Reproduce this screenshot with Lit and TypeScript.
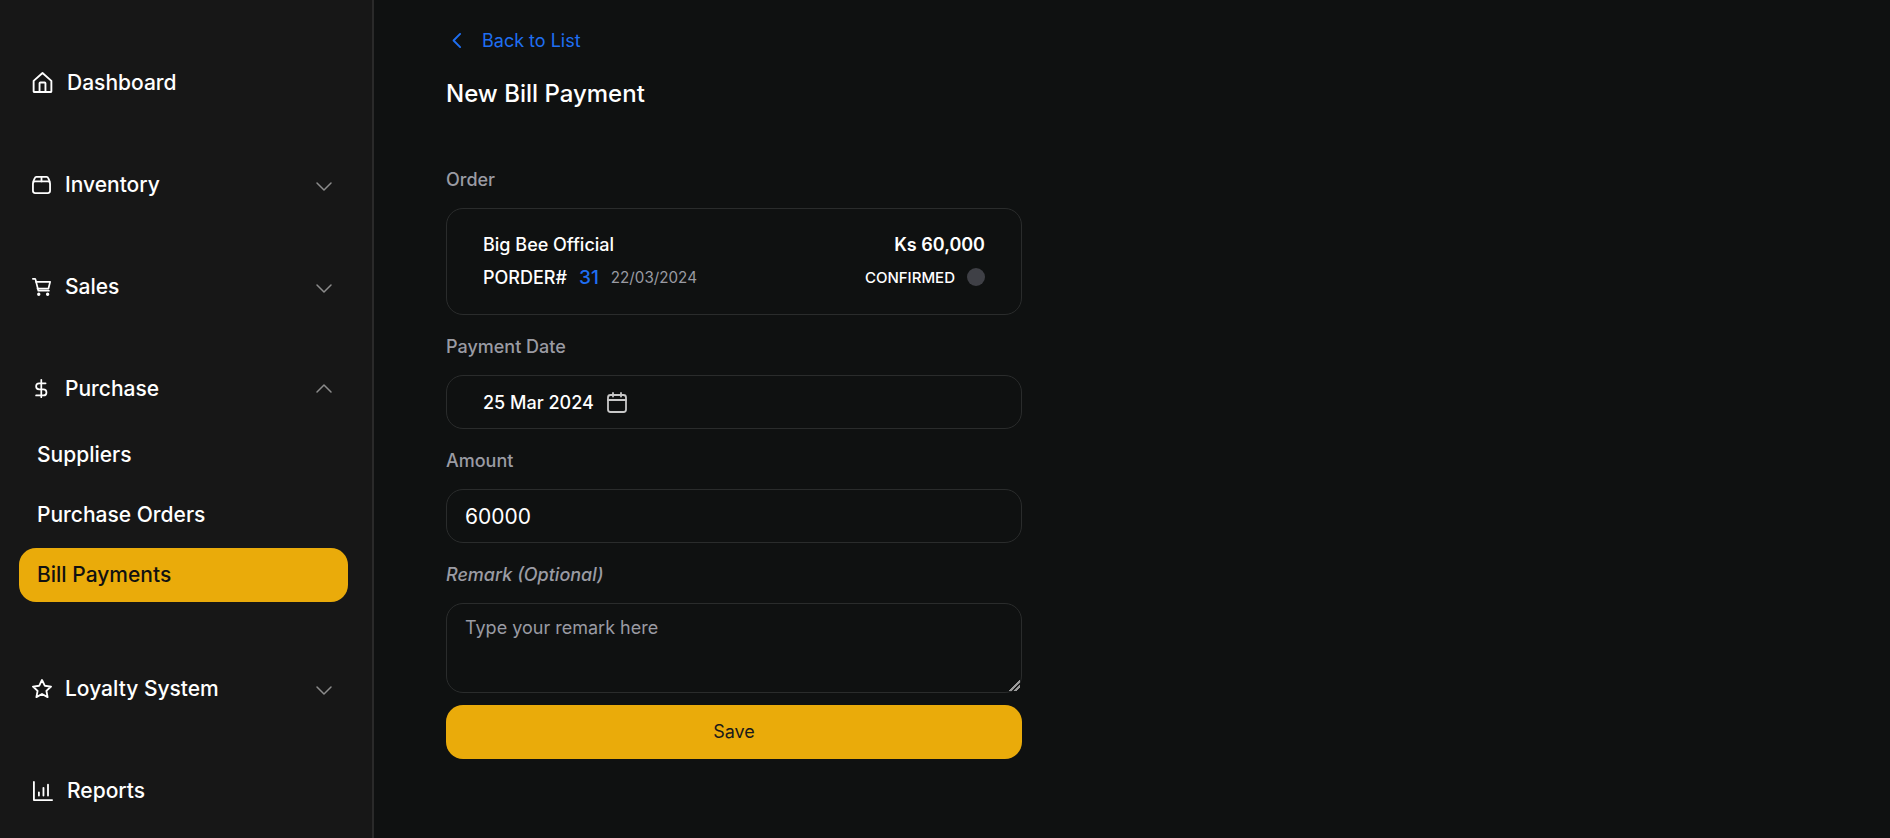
import { LitElement, html, css, svg } from "lit";
import { customElement } from "lit/decorators.js";

const ic = (w: number, h: number, vb: string, sw: number, body: unknown, cls = "") => html`<svg class=${cls} width=${w} height=${h} viewBox=${vb} fill="none" stroke="currentColor" stroke-width=${sw} stroke-linecap="round" stroke-linejoin="round">${body}</svg>`;

const home = svg`<path d="M3 10.5 12 2.5l9 8V21a.8.8 0 0 1-.8.8H3.8A.8.8 0 0 1 3 21z"/><path d="M9 21.8V13a.8.8 0 0 1 .8-.8h4.4a.8.8 0 0 1 .8.8v8.8"/>`;
const box = svg`<path d="M3 8.5 4.5 4.8A2 2 0 0 1 6.4 3.5h11.2a2 2 0 0 1 1.9 1.3L21 8.5"/><rect x="2.5" y="8.5" width="19" height="13" rx="2.5" /><path d="M12 3.5v5"/>`;
const cart = svg`<path d="M1.5 2.5h2.2c.5 0 .9.3 1 .8L8 16.5h12.5"/><path d="M5.2 6H22l-2 8H7"/><circle cx="8.5" cy="20.8" r="1" fill="currentColor"/><circle cx="19" cy="20.8" r="1" fill="currentColor"/>`;
const dollar = svg`<path d="M12 2v20"/><path d="M17 6H9.5a3.5 3.5 0 0 0 0 7h5a3.5 3.5 0 0 1 0 7H6"/>`;
const star = svg`<path d="M12 2.5l2.95 6.2 6.8.9-5 4.7 1.3 6.7-6.05-3.3-6.05 3.3 1.3-6.7-5-4.7 6.8-.9z"/>`;
const chart = svg`<path d="M2.5 2v20h20"/><path d="M8 17v-3.5M13 17V8.5M18 17V5"/>`;
const down = svg`<path d="M5 10l7 7 7-7"/>`;
const up = svg`<path d="M5 15l7-7 7 7"/>`;
const left = svg`<path d="M15 4.5 7.5 12l7.5 7.5"/>`;
const cal = svg`<rect x="3" y="4.5" width="18" height="17" rx="2.5"/><path d="M3 9.5h18M8 2.5v3.5M16 2.5v3.5"/>`;

const chev = (b: unknown) => ic(24, 24, "0 0 24 24", 1.5, b, "chev");

@customElement("app-root")
export class AppRoot extends LitElement {
  static styles = css`
    :host { display: block; height: 838px; overflow: hidden; background: #0f1111; font-family: Inter, "Liberation Sans", sans-serif; color: #fff; }
    .page { display: flex; height: 838px; }
    .side { flex: none; box-sizing: content-box; width: 329px; background: #171717; border-right: 2px solid #2a2a2a; padding: 55.5px 24px 0 19px; display: flex; flex-direction: column; }
    .row { flex: none; height: 54px; display: flex; align-items: center; font-size: 21px; font-weight: 500; }
    .top { margin-bottom: 48px; padding-left: 13px; padding-right: 12px; gap: 14px; }
    .lead { flex: none; width: 19px; display: flex; justify-content: center; }
    .lead svg { flex: none; }
    .wide { width: 21px; }
    .label { flex: 1; }
    .chev { color: #8c8c8c; flex: none; }
    .subs { flex: none; display: flex; flex-direction: column; gap: 6px; margin-top: -36px; margin-bottom: 60px; }
    .sub { padding-left: 18px; }
    .sub.on { background: #eaab0a; color: #111; border-radius: 17px; }
    main { flex: 1; padding-left: 72px; display: flex; flex-direction: column; }
    .back { display: flex; align-items: center; gap: 14px; color: #1f6ff2; font-size: 18px; height: 24px; margin-top: 28px; padding-left: 1px; }
    h1 { margin: 24px 0 0; font-size: 24px; font-weight: 500; line-height: 36px; }
    form { width: 576px; display: flex; flex-direction: column; margin-top: 56px; }
    .lab { font-size: 18px; font-weight: 500; color: #9a9ba3; line-height: 24px; margin-bottom: 16px; }
    .card { box-sizing: border-box; height: 107px; border: 1px solid #2a2c2c; border-radius: 17px; padding: 0 36px 2px; display: flex; flex-direction: column; justify-content: center; gap: 9px; margin-bottom: 20px; }
    .line { display: flex; align-items: center; justify-content: space-between; height: 24px; }
    .name { font-size: 18px; font-weight: 500; }
    .amt { font-size: 18px; font-weight: 600; }
    .po { display: flex; align-items: center; font-size: 18px; font-weight: 500; gap: 12px; }
    .po b { color: #1f6ff2; font-weight: 500; font-size: 19px; }
    .po span { color: #9a9ba3; font-size: 15.2px; font-weight: 400; }
    .status { display: flex; align-items: center; gap: 12px; font-size: 15px; font-weight: 500; }
    .dot { width: 18px; height: 18px; border-radius: 50%; background: #3f4046; }
    .date { box-sizing: border-box; height: 54px; border: 1px solid #2a2c2c; border-radius: 17px; padding-left: 36px; display: flex; align-items: center; gap: 13px; font-size: 18px; font-weight: 500; margin-bottom: 20px; }
    .date svg { color: #c8c8c8; }
    input, textarea { box-sizing: border-box; width: 100%; display: block; background: transparent; border: 1px solid #2a2c2c; border-radius: 17px; color: #fff; font-family: inherit; outline: none; margin: 0; }
    input { height: 54px; padding: 0 18px; font-size: 21px; margin-bottom: 20px; }
    textarea { height: 90px; padding: 12px 18px; font-size: 18px; line-height: 24px; }
    textarea::placeholder { color: #9a9ba3; opacity: 1; }
    textarea::-webkit-resizer { background: linear-gradient(135deg, transparent 46%, #9a9a9a 46% 60%, transparent 60% 70%, #9a9a9a 70% 82%, transparent 82%) no-repeat 3px 3px / 11px 11px; }
    .rem { font-style: italic; }
    button { margin-top: 12px; height: 54px; border: 0; border-radius: 17px; background: #eaab0a; color: #1a1a1a; font-family: inherit; font-size: 18px; padding-bottom: 2px; }
  `;

  render() {
    return html`<div class="page">
      <nav class="side">
        <div class="row top"><span class="lead wide">${ic(21, 21, "2 1.5 20 21.3", 1.9, home)}</span><span class="label">Dashboard</span></div>
        <div class="row top"><span class="lead">${ic(19, 18, "1.5 2.5 21 20", 2, box)}</span><span class="label">Inventory</span>${chev(down)}</div>
        <div class="row top"><span class="lead">${ic(19, 20, "0.5 1.5 22.5 21.3", 2, cart)}</span><span class="label">Sales</span>${chev(down)}</div>
        <div class="row top"><span class="lead">${ic(13, 19, "5 1 14.5 22", 2, dollar)}</span><span class="label">Purchase</span>${chev(up)}</div>
        <div class="subs">
          <div class="row sub">Suppliers</div>
          <div class="row sub">Purchase Orders</div>
          <div class="row sub on">Bill Payments</div>
        </div>
        <div class="row top"><span class="lead">${ic(20, 20, "1.2 1.5 21.6 21.5", 2, star)}</span><span class="label">Loyalty System</span>${chev(down)}</div>
        <div class="row top"><span class="lead wide">${ic(20, 20, "1.5 1 22 22", 2, chart)}</span><span class="label">Reports</span></div>
      </nav>
      <main>
        <div class="back">${ic(21, 21, "0 0 24 24", 2.2, left)}<span>Back to List</span></div>
        <h1>New Bill Payment</h1>
        <form>
          <label class="lab">Order</label>
          <div class="card">
            <div class="line"><span class="name">Big Bee Official</span><span class="amt">Ks 60,000</span></div>
            <div class="line">
              <div class="po">PORDER# <b>31</b> <span>22/03/2024</span></div>
              <div class="status">CONFIRMED <i class="dot"></i></div>
            </div>
          </div>
          <label class="lab">Payment Date</label>
          <div class="date">25 Mar 2024 ${ic(20, 21, "2 1.5 20 21", 1.8, cal)}</div>
          <label class="lab">Amount</label>
          <input .value=${"60000"} />
          <label class="lab rem">Remark (Optional)</label>
          <textarea placeholder="Type your remark here"></textarea>
          <button type="button">Save</button>
        </form>
      </main>
    </div>`;
  }
}
